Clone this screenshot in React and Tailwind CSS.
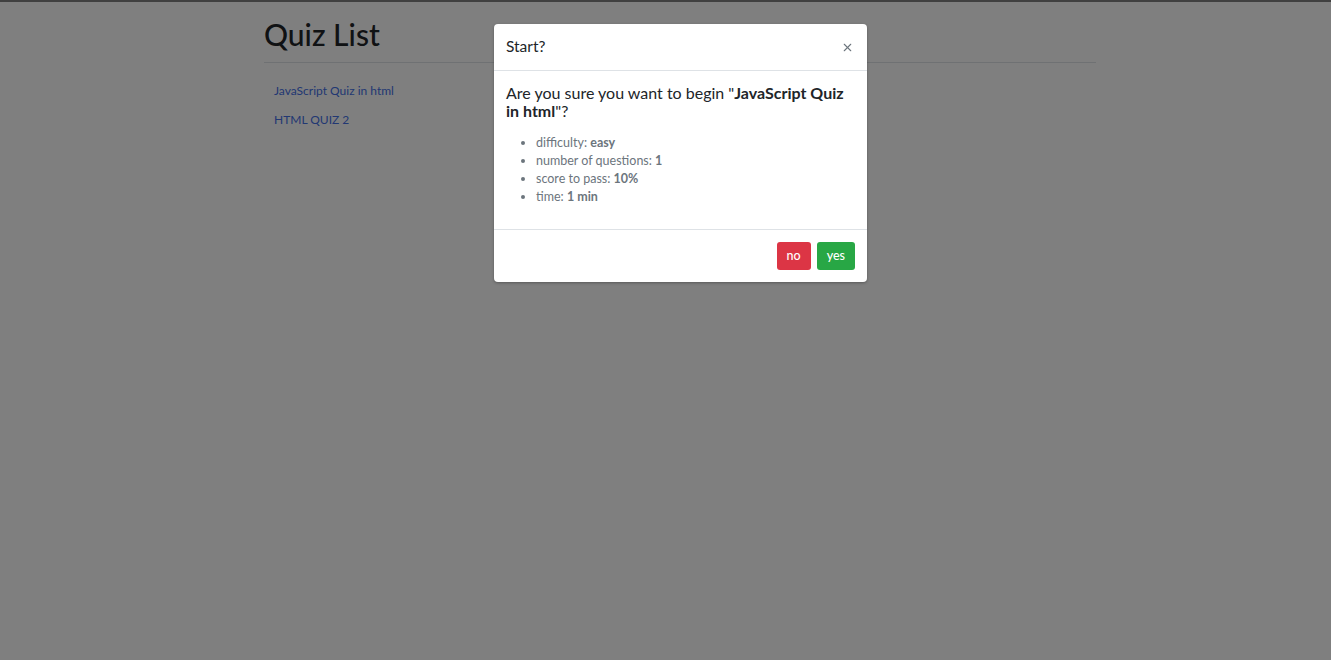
import { X } from 'lucide-react';

const quizzes = ['JavaScript Quiz in html', 'HTML QUIZ 2'];

const details = [
  { label: 'difficulty', value: 'easy' },
  { label: 'number of questions', value: '1' },
  { label: 'score to pass', value: '10%' },
  { label: 'time', value: '1 min' },
];

const App = () => {
  return (
    <div
      className="relative min-h-[660px] bg-white text-[#212529] border-t-2 border-[#808080]"
      style={{ fontFamily: 'Lato, "Noto Sans", sans-serif' }}
    >
      {/* Page */}
      <div className="w-[832px] ml-[264px]">
        <h1 className="text-[30px] leading-[40px] font-medium pt-[12px] pb-[8px]">Quiz List</h1>
        <div className="border-t border-[#dee2e6]" />
        <ul className="pt-[19px] pl-[10px] text-[12px]">
          {quizzes.map((q) => (
            <li key={q} className="h-[29px] leading-[18px]">
              <a href="#" className="text-[#4470e6]">
                {q}
              </a>
            </li>
          ))}
        </ul>
      </div>

      {/* Backdrop */}
      <div className="absolute inset-0 -top-[2px] bg-black/50" />

      {/* Modal */}
      <div className="absolute left-[494px] top-[22px] w-[373px] bg-white rounded-[4px] shadow-[0_1px_3px_rgba(0,0,0,0.3)]">
        <div className="h-[47px] px-3 flex items-center justify-between border-b border-[#dee2e6]">
          <span className="text-[15.5px]">Start?</span>
          <button className="text-[#6c757d] mr-[1px]">
            <X size={13} strokeWidth={2} />
          </button>
        </div>
        <div className="px-3 pt-[13px] pb-[23px]">
          <p className="text-[16px] leading-[18px]">
            Are you sure you want to begin "<b className="font-bold">JavaScript Quiz in html</b>"?
          </p>
          <ul className="mt-[14px] pl-[30px] list-disc text-[12.5px] leading-[18px] text-[#6c757d] marker:text-[#6c757d]">
            {details.map((d) => (
              <li key={d.label}>
                {d.label}: <b className="font-bold">{d.value}</b>
              </li>
            ))}
          </ul>
        </div>
        <div className="border-t border-[#dee2e6] px-3 py-3 flex justify-end gap-[6px]">
          <button className="h-[28px] px-[10px] rounded-[3px] bg-[#dc3545] text-white text-[12.5px] font-medium">
            no
          </button>
          <button className="h-[28px] px-[10px] rounded-[3px] bg-[#28a745] text-white text-[12.5px] font-medium">
            yes
          </button>
        </div>
      </div>
    </div>
  );
};

export default App;
